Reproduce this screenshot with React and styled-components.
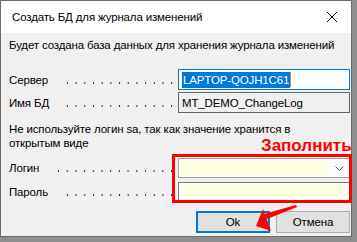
import React from 'react';
import styled, { createGlobalStyle } from 'styled-components';

const Global = createGlobalStyle`
  html, body {
    margin: 0;
    padding: 0;
  }
  body {
    font-family: "Liberation Sans", Arial, sans-serif;
    font-size: 11.5px;
    letter-spacing: -0.15px;
    color: #000000;
    background: #8e8e8e;
  }
`;

const Screen = styled.div`
  position: relative;
  width: 357px;
  height: 242px;
  background: #8e8e8e;
  overflow: hidden;
`;

const Window = styled.div`
  width: 350px;
  height: 235px;
  border: 1px solid #6a6a6a;
  background: #f0f0f0;
  display: flex;
  flex-direction: column;
`;

const TitleBar = styled.div`
  height: 32px;
  background: #ffffff;
  display: flex;
  align-items: center;
  justify-content: space-between;
  padding: 0 14px 0 11px;
`;

const Body = styled.div`
  flex: 1;
  padding: 4px 0 0 8px;
  display: flex;
  flex-direction: column;
`;

const Intro = styled.div`
  line-height: 16px;
  margin-bottom: 16px;
  white-space: nowrap;
`;

const Row = styled.div`
  display: grid;
  grid-template-columns: 169px 172px;
  align-items: center;
  height: ${(p) => p.h || 22}px;
  margin-bottom: ${(p) => p.mb || 0}px;
`;

const LabelCell = styled.div`
  display: flex;
  align-items: center;
  padding-right: 2px;
`;

const Label = styled.span`
  white-space: nowrap;
  margin-right: 12px;
`;

const Leader = styled.span`
  flex: 1;
  height: 4px;
  margin-top: 6px;
  background-image: radial-gradient(circle, #3a3044 0 0.7px, transparent 1.1px);
  background-size: 8.7px 4px;
  background-repeat: repeat-x;
  background-position: right center;
`;

const Field = styled.div`
  height: 100%;
  box-sizing: border-box;
  border: 1px solid ${(p) => p.border || '#7a7a7a'};
  background: ${(p) => p.bg || '#ffffff'};
  display: flex;
  align-items: center;
  padding: ${(p) => p.pad || '0 0 0 3px'};
  white-space: nowrap;
`;

const Selected = styled.span`
  background: #0078d7;
  color: #ffffff;
  line-height: 16px;
  padding: 0 1px;
`;

const Caret = styled.span`
  width: 1px;
  height: 15px;
  background: #e08020;
`;

const Inner = styled.div`
  flex: 1;
  height: 100%;
  background: #ffffe1;
`;

const DropZone = styled.div`
  width: 20px;
  height: 100%;
  display: flex;
  align-items: center;
  justify-content: center;
`;

const Note = styled.div`
  line-height: 14px;
  margin-bottom: 8px;
  white-space: nowrap;
`;

const Buttons = styled.div`
  display: flex;
  gap: 6px;
  margin: 10px 0 0 187px;
`;

const Button = styled.div`
  width: 74px;
  height: 22px;
  box-sizing: border-box;
  background: #e1e1e1;
  border: ${(p) => (p.primary ? '2px solid #0078d7' : '1px solid #adadad')};
  display: flex;
  align-items: center;
  justify-content: center;
`;

const RedFrame = styled.div`
  position: absolute;
  left: 172px;
  top: 154px;
  width: 180px;
  height: 49px;
  box-sizing: border-box;
  border: 3px solid #ff0000;
`;

const Callout = styled.div`
  position: absolute;
  left: 261px;
  top: 136px;
  color: #ff0000;
  font-weight: bold;
  font-size: 17px;
  letter-spacing: 0;
`;

const ArrowLayer = styled.svg`
  position: absolute;
  left: 0;
  top: 0;
`;

const Chevron = () => (
  <svg width="9" height="5" viewBox="0 0 9 5">
    <path d="M0.5 0.5 L4.5 4.5 L8.5 0.5" fill="none" stroke="#555" strokeWidth="1" />
  </svg>
);

const CloseIcon = () => (
  <svg width="10" height="10" viewBox="0 0 10 10">
    <path d="M0 0 L10 10 M10 0 L0 10" stroke="#000" strokeWidth="1" />
  </svg>
);

export default function App() {
  return (
    <Screen>
      <Global />
      <Window>
        <TitleBar>
          <span>Создать БД для журнала изменений</span>
          <CloseIcon />
        </TitleBar>
        <Body>
          <Intro>Будет создана база данных для хранения журнала изменений</Intro>
          <Row h={21} mb={2}>
            <LabelCell>
              <Label>Сервер</Label>
              <Leader />
            </LabelCell>
            <Field border="#0078d7">
              <Selected>LAPTOP-QOJH1C61</Selected>
              <Caret />
            </Field>
          </Row>
          <Row h={21} mb={9}>
            <LabelCell>
              <Label>Имя БД</Label>
              <Leader />
            </LabelCell>
            <Field bg="#f0f0f0" border="#646464">
              MT_DEMO_ChangeLog
            </Field>
          </Row>
          <Note>
            Не используйте логин sa, так как значение хранится в
            <br />
            открытым виде
          </Note>
          <Row h={20} mb={4}>
            <LabelCell>
              <Label>Логин</Label>
              <Leader />
            </LabelCell>
            <Field border="#a0a0a0" pad="2px 0 2px 2px">
              <Inner />
              <DropZone>
                <Chevron />
              </DropZone>
            </Field>
          </Row>
          <Row h={19}>
            <LabelCell>
              <Label>Пароль</Label>
              <Leader />
            </LabelCell>
            <Field border="#7a7a7a" pad="2px">
              <Inner />
            </Field>
          </Row>
          <Buttons>
            <Button primary>Ok</Button>
            <Button>Отмена</Button>
          </Buttons>
        </Body>
      </Window>
      <Callout>Заполнить</Callout>
      <RedFrame />
      <ArrowLayer width="357" height="242" viewBox="0 0 357 242">
        <polygon points="296,205 297,207 267,219 264,214" fill="#ff0000" />
        <polygon points="256,226 263,209 271,231" fill="#ff0000" />
      </ArrowLayer>
    </Screen>
  );
}
